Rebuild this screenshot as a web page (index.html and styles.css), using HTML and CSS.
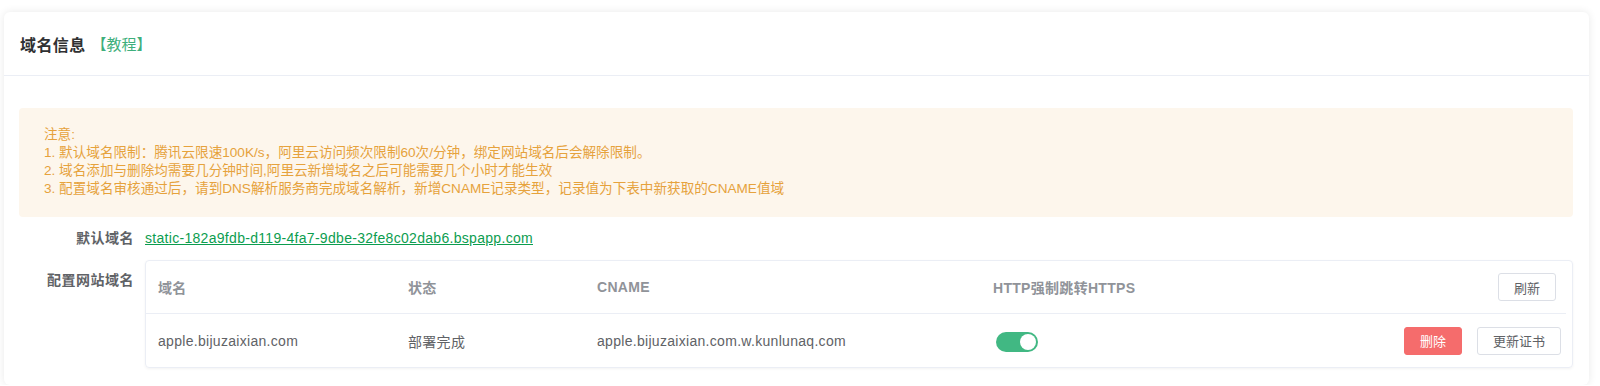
FILE: index.html
```html
<!DOCTYPE html>
<html>
<head>
    <meta charset="utf-8">
    <title>域名信息</title>
    <link rel="stylesheet" href="styles.css">
</head>
<body>
    <div class="card">
        <div class="card-header">
            <span class="card-title">域名信息</span>
            <a class="tutorial" href="#">【教程】</a>
        </div>
        <div class="card-body">
            <div class="notice">
                <p>注意:</p>
                <p>1. 默认域名限制：腾讯云限速100K/s，阿里云访问频次限制60次/分钟，绑定网站域名后会解除限制。</p>
                <p>2. 域名添加与删除均需要几分钟时间,阿里云新增域名之后可能需要几个小时才能生效</p>
                <p>3. 配置域名审核通过后，请到DNS解析服务商完成域名解析，新增CNAME记录类型，记录值为下表中新获取的CNAME值域</p>
            </div>

            <div class="form-item form-item-short">
                <label class="form-label">默认域名</label>
                <div class="form-content">
                    <a class="domain-link" href="#">static-182a9fdb-d119-4fa7-9dbe-32fe8c02dab6.bspapp.com</a>
                </div>
            </div>

            <div class="form-item">
                <label class="form-label">配置网站域名</label>
                <div class="form-content">
                    <div class="domain-table">
                        <div class="row row-head">
                            <div class="cell">域名</div>
                            <div class="cell">状态</div>
                            <div class="cell">CNAME</div>
                            <div class="cell">HTTP强制跳转HTTPS</div>
                            <div class="cell cell-op">
                                <button class="btn">刷新</button>
                            </div>
                        </div>
                        <div class="row">
                            <div class="cell">apple.bijuzaixian.com</div>
                            <div class="cell">部署完成</div>
                            <div class="cell">apple.bijuzaixian.com.w.kunlunaq.com</div>
                            <div class="cell">
                                <span class="switch is-on"><span class="switch-knob"></span></span>
                            </div>
                            <div class="cell cell-op">
                                <button class="btn btn-danger">删除</button>
                                <button class="btn">更新证书</button>
                            </div>
                        </div>
                    </div>
                </div>
            </div>
        </div>
    </div>
</body>
</html>
```

FILE: styles.css
```css
body {
    margin: 0;
    padding: 12px 11px 0 4px;
    background-color: #fff;
    font-family: "Liberation Sans", "Noto Sans CJK SC", sans-serif;
    color: #606266;
}
.card {
    background-color: #fff;
    border-radius: 6px;
    box-shadow: 0 0 8px rgba(0, 0, 0, 0.09);
    height: 373px;
    box-sizing: border-box;
}
.card-header {
    display: flex;
    align-items: center;
    height: 63px;
    padding: 0 16px;
    border-bottom: 1px solid #ebeef5;
}
.card-title {
    font-size: 16px;
    font-weight: bold;
    color: #303133;
    letter-spacing: 0.4px;
}
.tutorial {
    margin-left: 6px;
    font-size: 15px;
    color: #3eaf7c;
    text-decoration: none;
}
.card-body {
    padding: 32px 16px 0 15px;
}
.notice {
    background-color: #fdf6ec;
    color: #e6a23c;
    border-radius: 4px;
    padding: 18px 25px 19px;
    font-size: 13.6px;
    line-height: 18px;
}
.notice p {
    margin: 0;
}
.form-item {
    display: flex;
}
.form-label {
    width: 126px;
    padding-right: 11px;
    box-sizing: border-box;
    text-align: right;
    line-height: 40px;
    font-size: 14px;
    font-weight: bold;
    color: #606266;
    letter-spacing: 0.5px;
    flex-shrink: 0;
}
.form-item-short .form-label,
.form-item-short .form-content {
    line-height: 43px;
}
.form-content {
    flex: 1;
    line-height: 40px;
    font-size: 14px;
    letter-spacing: 0.3px;
}
.domain-link {
    color: #0c9d4f;
    text-decoration: underline;
}
.domain-table {
    border: 1px solid #ebeef5;
    border-radius: 4px;
    box-shadow: 0 1px 3px rgba(0, 0, 0, 0.05);
    line-height: normal;
}
.row {
    display: grid;
    grid-template-columns: 250px 189px 396px 1fr auto;
    align-items: center;
    height: 53px;
}
.row-head {
    height: 52px;
    border-bottom: 1px solid #ebeef5;
    margin-right: 6px;
    font-weight: bold;
    color: #909399;
}
.cell {
    padding: 0 12px;
    white-space: nowrap;
}
.cell-op {
    display: flex;
    gap: 15px;
    padding-right: 11px;
}
.row-head .cell-op {
    padding-right: 10px;
}
.btn {
    height: 28px;
    padding: 0 15px;
    border: 1px solid #dcdfe6;
    border-radius: 3px;
    background-color: #fff;
    color: #606266;
    font-family: inherit;
    font-size: 13px;
    cursor: pointer;
}
.btn-danger {
    background-color: #f56c6c;
    border-color: #f56c6c;
    color: #fff;
}
.switch {
    display: inline-block;
    position: relative;
    width: 42px;
    height: 20px;
    margin-left: 3px;
    margin-top: 2px;
    border-radius: 10px;
    background-color: #dcdfe6;
    vertical-align: middle;
}
.switch.is-on {
    background-color: #41b883;
}
.switch-knob {
    position: absolute;
    top: 2px;
    left: 2px;
    width: 16px;
    height: 16px;
    border-radius: 50%;
    background-color: #fff;
}
.switch.is-on .switch-knob {
    left: 24px;
}
```
